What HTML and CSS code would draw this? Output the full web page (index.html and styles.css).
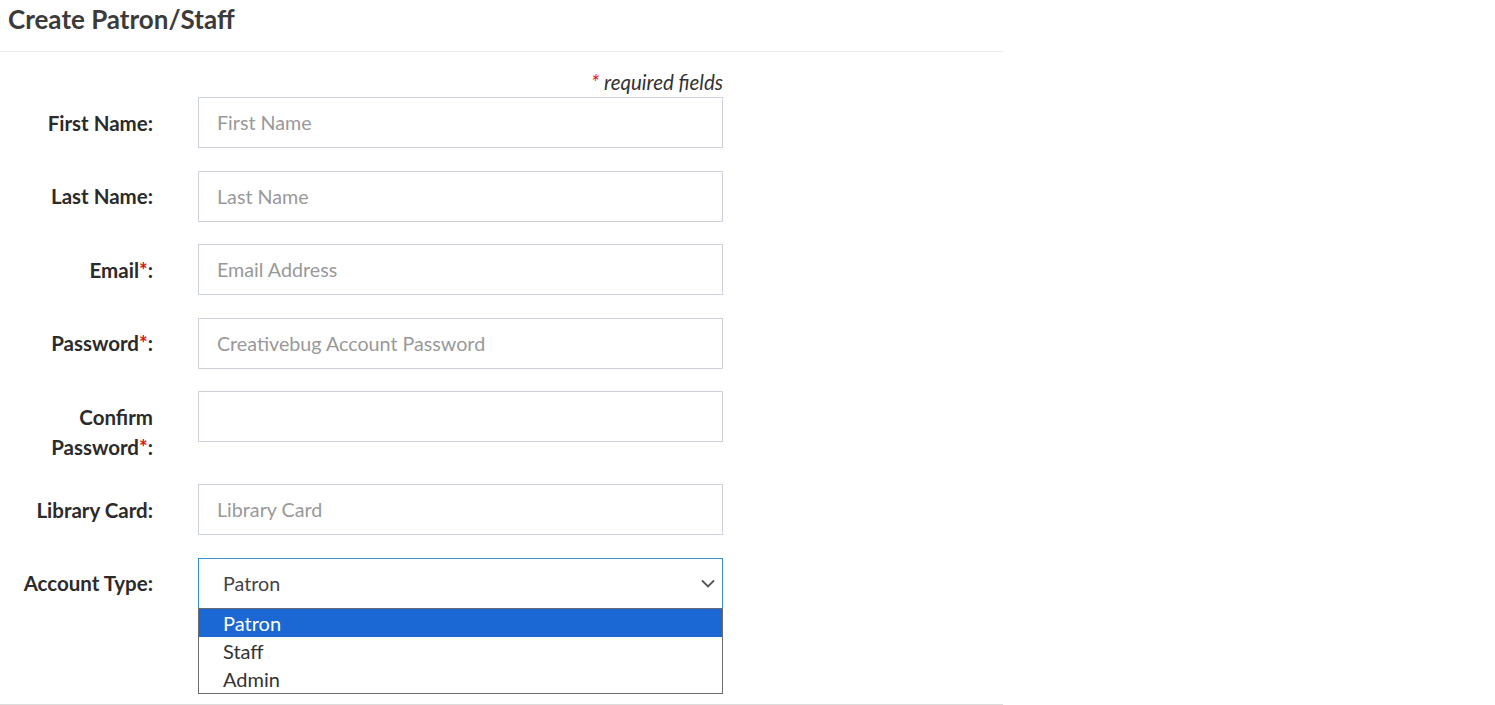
FILE: index.html
```html
<!DOCTYPE html>
<html lang="en">
<head>
<meta charset="utf-8">
<title>Create Patron/Staff</title>
<link rel="stylesheet" href="styles.css">
</head>
<body>
<div class="page">
  <h1 class="title">Create Patron/Staff</h1>
  <form class="form">
    <div class="note"><span class="req">*</span> required fields</div>
    <div class="row">
      <label class="label">First Name:</label>
      <input class="field" type="text" placeholder="First Name">
    </div>
    <div class="row">
      <label class="label">Last Name:</label>
      <input class="field" type="text" placeholder="Last Name">
    </div>
    <div class="row">
      <label class="label">Email<span class="req">*</span>:</label>
      <input class="field" type="text" placeholder="Email Address">
    </div>
    <div class="row">
      <label class="label">Password<span class="req">*</span>:</label>
      <input class="field" type="text" placeholder="Creativebug Account Password">
    </div>
    <div class="row">
      <label class="label">Confirm<br>Password<span class="req">*</span>:</label>
      <input class="field" type="password">
    </div>
    <div class="row">
      <label class="label">Library Card:</label>
      <input class="field" type="text" placeholder="Library Card">
    </div>
    <div class="row last">
      <label class="label">Account Type:</label>
      <div class="select-wrap">
        <div class="select">
          <span class="select-value">Patron</span>
          <svg class="chevron" width="14" height="9" viewBox="0 0 14 9"><path d="M1 1.5 L7 7.5 L13 1.5" fill="none" stroke="#555" stroke-width="1.8"/></svg>
        </div>
        <ul class="options">
          <li class="option selected">Patron</li>
          <li class="option">Staff</li>
          <li class="option">Admin</li>
        </ul>
      </div>
    </div>
  </form>
</div>
</body>
</html>
```
FILE: styles.css
```css
html, body {
  margin: 0;
  padding: 0;
  background: #fff;
}
body {
  font-family: Lato, "Liberation Sans", sans-serif;
  color: #333;
}
.page {
  width: 1003px;
  border-bottom: 1px solid #dcdcdc;
  height: 705px;
  box-sizing: border-box;
}
.title {
  margin: 0;
  height: 52px;
  box-sizing: border-box;
  padding: 3px 8px 0;
  font-size: 26px;
  line-height: 32px;
  font-weight: 700;
  color: #3b3b3b;
  border-bottom: 1px solid #eeeeee;
}
.form {
  padding-top: 19px;
  width: 723px;
}
.note {
  text-align: right;
  font-style: italic;
  font-size: 20.5px;
  line-height: 22px;
  height: 26px;
  color: #333;
}
.req {
  color: #e01010;
}
.row {
  display: flex;
  gap: 45px;
  margin-bottom: 22.5px;
}
.label {
  width: 153px;
  flex: none;
  text-align: right;
  font-weight: 700;
  font-size: 20.5px;
  line-height: 30px;
  padding-top: 10.5px;
  color: #2b2b2b;
}
.field {
  width: 525px;
  height: 51px;
  box-sizing: border-box;
  margin: 0;
  border: 1px solid #cdd1d9;
  border-radius: 0;
  padding: 0 18px;
  font-family: Lato, "Liberation Sans", sans-serif;
  font-size: 19.7px;
  color: #333;
  outline: none;
}
.field::placeholder {
  color: #999;
}
.select-wrap {
  position: relative;
  width: 525px;
}
.select {
  height: 51px;
  box-sizing: border-box;
  border: 1px solid #3890cf;
  display: flex;
  align-items: center;
  justify-content: space-between;
  padding: 0 7px 0 24px;
  font-size: 19.7px;
  color: #444;
}
.chevron {
  display: block;
}
.options {
  position: absolute;
  left: 0;
  top: 50px;
  width: 525px;
  box-sizing: border-box;
  margin: 0;
  padding: 0;
  list-style: none;
  border: 1px solid #6b6b6b;
  background: #fff;
  font-size: 20px;
}
.option {
  height: 28px;
  line-height: 28px;
  padding-left: 24px;
  color: #333;
}
.option.selected {
  background: #1b67d3;
  color: #fff;
}
```
